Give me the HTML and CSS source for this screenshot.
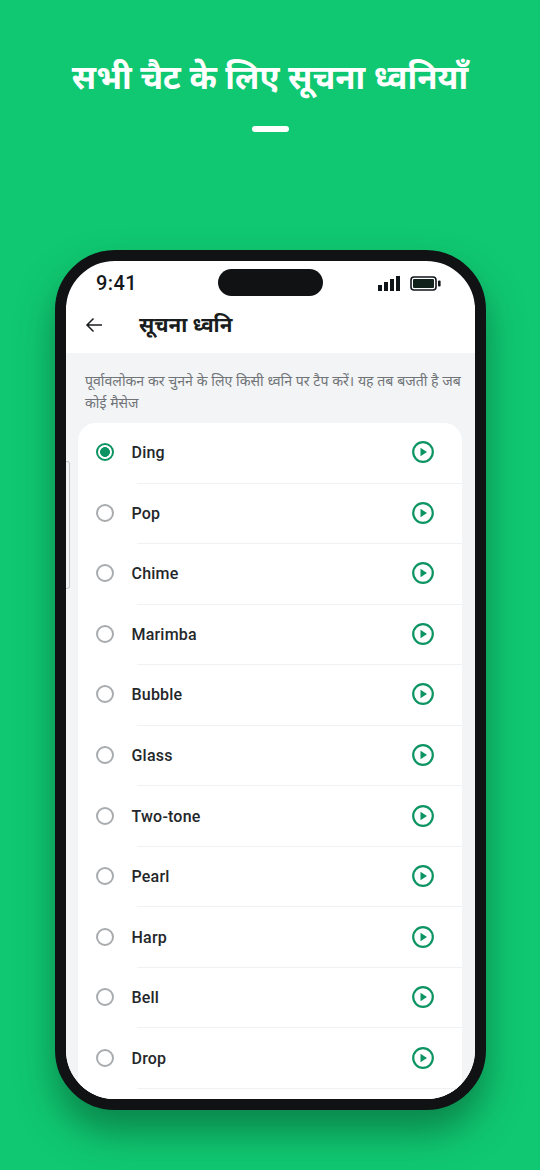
FILE: index.html
```html
<!DOCTYPE html>
<html lang="hi">
<head>
<meta charset="utf-8">
<title>सूचना ध्वनि</title>
<link rel="stylesheet" href="styles.css">
</head>
<body>
<main class="page">
  <h1 class="headline">सभी चैट के लिए सूचना ध्वनियाँ</h1>
  <div class="dash"></div>
  <div class="phone">
    <div class="screen">
      <div class="handle"></div>
      <div class="status">
        <span class="time">9:41</span>
        <div class="island"></div>
        <div class="status-icons">
          <svg class="signal" width="22" height="15" viewBox="0 0 22 15"><rect x="0" y="9" width="4" height="6"/><rect x="6" y="6" width="4" height="9"/><rect x="12" y="3" width="4" height="12"/><rect x="18" y="0" width="4" height="15"/></svg>
          <svg class="battery" width="31" height="15" viewBox="0 0 31 15"><rect x="1" y="1" width="25" height="13" rx="3" fill="none" stroke="#10151a" stroke-width="1.6"/><rect x="3" y="3" width="21" height="9" rx="1" fill="#10201a"/><rect x="28" y="4.5" width="2.6" height="6" rx="1" fill="#10151a"/></svg>
        </div>
      </div>
      <div class="appbar">
        <svg class="back" width="18" height="16" viewBox="0 0 18 16"><path d="M17 8H2M8.500 1.500 2 8l6.500 6.500" fill="none" stroke="#1a1d20" stroke-width="1.500"/></svg>
        <h2 class="title">सूचना ध्वनि</h2>
      </div>
      <div class="body">
        <p class="hint">पूर्वावलोकन कर चुनने के लिए किसी ध्वनि पर टैप करें। यह तब बजती है जब कोई मैसेज</p>
        <ul class="card">
          <li class="row"><span class="radio on"></span><span class="name">Ding</span><svg class="play" viewBox="0 0 22 22"><circle cx="11" cy="11" r="9.800"/><path d="M8.500 6.700v8.600l6.500-4.300z"/></svg></li>
          <li class="row"><span class="radio"></span><span class="name">Pop</span><svg class="play" viewBox="0 0 22 22"><circle cx="11" cy="11" r="9.800"/><path d="M8.500 6.700v8.600l6.500-4.300z"/></svg></li>
          <li class="row"><span class="radio"></span><span class="name">Chime</span><svg class="play" viewBox="0 0 22 22"><circle cx="11" cy="11" r="9.800"/><path d="M8.500 6.700v8.600l6.500-4.300z"/></svg></li>
          <li class="row"><span class="radio"></span><span class="name">Marimba</span><svg class="play" viewBox="0 0 22 22"><circle cx="11" cy="11" r="9.800"/><path d="M8.500 6.700v8.600l6.500-4.300z"/></svg></li>
          <li class="row"><span class="radio"></span><span class="name">Bubble</span><svg class="play" viewBox="0 0 22 22"><circle cx="11" cy="11" r="9.800"/><path d="M8.500 6.700v8.600l6.500-4.300z"/></svg></li>
          <li class="row"><span class="radio"></span><span class="name">Glass</span><svg class="play" viewBox="0 0 22 22"><circle cx="11" cy="11" r="9.800"/><path d="M8.500 6.700v8.600l6.500-4.300z"/></svg></li>
          <li class="row"><span class="radio"></span><span class="name">Two-tone</span><svg class="play" viewBox="0 0 22 22"><circle cx="11" cy="11" r="9.800"/><path d="M8.500 6.700v8.600l6.500-4.300z"/></svg></li>
          <li class="row"><span class="radio"></span><span class="name">Pearl</span><svg class="play" viewBox="0 0 22 22"><circle cx="11" cy="11" r="9.800"/><path d="M8.500 6.700v8.600l6.500-4.300z"/></svg></li>
          <li class="row"><span class="radio"></span><span class="name">Harp</span><svg class="play" viewBox="0 0 22 22"><circle cx="11" cy="11" r="9.800"/><path d="M8.500 6.700v8.600l6.500-4.300z"/></svg></li>
          <li class="row"><span class="radio"></span><span class="name">Bell</span><svg class="play" viewBox="0 0 22 22"><circle cx="11" cy="11" r="9.800"/><path d="M8.500 6.700v8.600l6.500-4.300z"/></svg></li>
          <li class="row"><span class="radio"></span><span class="name">Drop</span><svg class="play" viewBox="0 0 22 22"><circle cx="11" cy="11" r="9.800"/><path d="M8.500 6.700v8.600l6.500-4.300z"/></svg></li>
        </ul>
      </div>
    </div>
  </div>
</main>
</body>
</html>
```
FILE: styles.css
```css
* { box-sizing: border-box; }
html, body { margin: 0; padding: 0; }
body {
  width: 540px;
  height: 1170px;
  overflow: hidden;
  background: #10c871;
  font-family: "Noto Sans", "Noto Sans Devanagari", "Lohit Devanagari", Roboto, sans-serif;
}
.page {
  display: flex;
  flex-direction: column;
  align-items: center;
  height: 1170px;
  padding-top: 52px;
}
.headline {
  margin: 0;
  height: 50px;
  font-size: 33px;
  line-height: 50px;
  font-weight: 700;
  color: #fff;
  text-align: center;
  white-space: nowrap;
}
.dash {
  width: 37px;
  height: 6px;
  margin-top: 24px;
  border-radius: 3px;
  background: #fff;
}
.phone {
  width: 431px;
  height: 860px;
  margin-top: 118px;
  margin-left: 1px;
  border: 11px solid #101214;
  border-radius: 60px;
  background: #fff;
  box-shadow: 0 22px 36px rgba(6, 70, 40, 0.5);
  overflow: hidden;
}
.screen {
  position: relative;
  height: 100%;
  display: flex;
  flex-direction: column;
}
.handle {
  position: absolute;
  left: 0;
  top: 200px;
  width: 4px;
  height: 128px;
  border: 1px solid #c4c6c8;
  border-left: 0;
  border-radius: 0 3px 3px 0;
  background: #f3f4f6;
  z-index: 2;
}
.status {
  position: relative;
  flex: none;
  height: 44px;
  display: flex;
  align-items: center;
  justify-content: space-between;
  padding: 0 34px 0 30px;
}
.time {
  font-family: Roboto, sans-serif;
  font-size: 20px;
  font-weight: 500;
  letter-spacing: 0.4px;
  color: #15181b;
}
.island {
  position: absolute;
  left: 152px;
  top: 8px;
  width: 105px;
  height: 27px;
  border-radius: 14px;
  background: #101214;
}
.status-icons {
  display: flex;
  align-items: center;
  gap: 10px;
}
.signal { fill: #10151a; }
.appbar {
  flex: none;
  height: 48px;
  display: flex;
  align-items: center;
  padding: 0 0 8px 19px;
  background: #fff;
}
.back { flex: none; }
.title {
  margin: 0 0 2px 36px;
  font-size: 20.6px;
  line-height: 30px;
  font-weight: 700;
  color: #1a1d20;
}
.body {
  flex: 1;
  min-height: 0;
  background: #f3f4f6;
  padding: 0 13px 0 12px;
  overflow: hidden;
}
.hint {
  margin: 0;
  padding: 17px 0 0 7px;
  height: 70px;
  font-size: 14.1px;
  word-spacing: 0.1px;
  line-height: 22px;
  color: #707478;
}
.card {
  list-style: none;
  margin: 0;
  padding: 0 0 40px;
  background: #fff;
  border-radius: 18px;
}
.row {
  position: relative;
  height: 60.55px;
  display: flex;
  align-items: center;
  padding: 0 28.500px 1px 17.500px;
}
.row::after {
  content: "";
  position: absolute;
  left: 59px;
  right: 0;
  bottom: 0;
  height: 1px;
  background: #f0f1f3;
}
.radio {
  flex: none;
  width: 18px;
  height: 18px;
  margin-bottom: 1px;
  border: 2px solid #a9acaf;
  border-radius: 50%;
}
.radio.on {
  border: 2px solid #0c9463;
  background: radial-gradient(circle, #0c9463 0 4.6px, #fff 5.2px);
}
.name {
  flex: 1;
  margin-left: 18px;
  font-family: Roboto, sans-serif;
  font-size: 16px;
  font-weight: 500;
  letter-spacing: 0.2px;
  color: #24272a;
}
.play {
  flex: none;
  width: 22px;
  height: 22px;
  margin-bottom: 1px;
}
.play circle { fill: none; stroke: #0c9463; stroke-width: 2.2; }
.play path { fill: #0c9463; }
```
